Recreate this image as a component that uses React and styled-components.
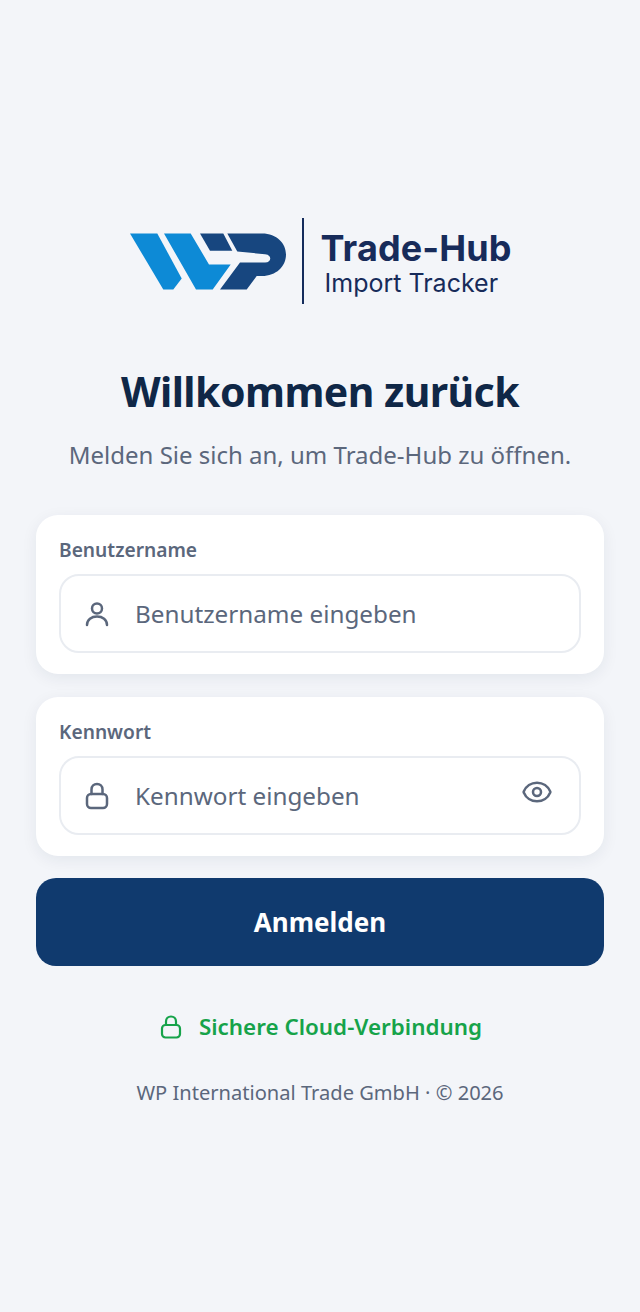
import React from "react";
import styled, { createGlobalStyle } from "styled-components";
import { Eye } from "lucide-react";

const GlobalStyle = createGlobalStyle`
  html, body {
    margin: 0;
    padding: 0;
    background: #f3f5f9;
  }
  * {
    box-sizing: border-box;
  }
`;

const Page = styled.div`
  width: 640px;
  height: 1312px;
  padding: 218px 36px 0;
  background: #f3f5f9;
  font-family: "Noto Sans", "Open Sans", sans-serif;
  display: flex;
  flex-direction: column;
`;

const Logo = styled.div`
  display: flex;
  align-items: center;
  justify-content: center;
  height: 86px;
  padding-left: 1px;
`;

const LogoDivider = styled.div`
  width: 2px;
  height: 86px;
  background: #142c5c;
  margin: 0 17px 0 14px;
`;

const LogoText = styled.div`
  display: flex;
  flex-direction: column;
  margin-top: 1px;
`;

const LogoTitle = styled.div`
  font-family: Inter, sans-serif;
  font-size: 36px;
  line-height: 42px;
  font-weight: 700;
  color: #172b5a;
  letter-spacing: 0.1px;
  white-space: nowrap;
`;

const LogoSubtitle = styled.div`
  font-family: Inter, sans-serif;
  font-size: 25px;
  line-height: 28px;
  font-weight: 400;
  color: #172b5a;
  margin-left: 4px;
  white-space: nowrap;
`;

const Title = styled.h1`
  margin: 60px 0 0;
  font-size: 41px;
  line-height: 54px;
  font-weight: 700;
  color: #0f2747;
  text-align: center;
  letter-spacing: -0.55px;
`;

const Subtitle = styled.p`
  margin: 20px 0 0;
  font-size: 24px;
  line-height: 34px;
  color: #5b677c;
  text-align: center;
`;

const Card = styled.div`
  margin-top: ${(props) => props.$top}px;
  background: #ffffff;
  border-radius: 22px;
  padding: 22px 23px 21px;
  box-shadow: 0 4px 16px rgba(15, 39, 71, 0.07);
`;

const Label = styled.label`
  display: block;
  font-size: 19.2px;
  line-height: 26px;
  font-weight: 600;
  color: #5b677c;
`;

const Field = styled.div`
  margin-top: 11px;
  height: 79px;
  border: 2px solid #e9ecf1;
  border-radius: 20px;
  display: flex;
  align-items: center;
  padding: 0 26px 0 23px;
  color: #5b677c;
`;

const FieldIcon = styled.svg`
  width: 26px;
  height: 28px;
  flex: none;
  fill: none;
  stroke: currentColor;
  stroke-width: 2.5;
  stroke-linecap: round;
  stroke-linejoin: round;
`;

const FieldText = styled.span`
  flex: 1;
  margin-left: 25px;
  font-size: 24.25px;
  color: #5b677c;
`;

const EyeIcon = styled(Eye)`
  margin-top: -8px;
  flex: none;
`;

const SubmitButton = styled.button`
  margin-top: 22px;
  height: 88px;
  border: none;
  border-radius: 20px;
  background: #103a6e;
  color: #ffffff;
  font-family: inherit;
  font-size: 26px;
  font-weight: 700;
`;

const Secure = styled.div`
  margin-top: 44px;
  padding-left: 2px;
  display: flex;
  align-items: center;
  justify-content: center;
  gap: 17px;
  color: #16a34a;
  font-size: 22.4px;
  font-weight: 600;
  line-height: 34px;
`;

const SecureIcon = styled.svg`
  width: 22px;
  height: 24px;
  flex: none;
  fill: none;
  stroke: currentColor;
  stroke-width: 2.2;
  stroke-linecap: round;
  stroke-linejoin: round;
`;

const Footer = styled.div`
  margin-top: 35px;
  text-align: center;
  font-size: 20.1px;
  line-height: 28px;
  color: #5b677c;
`;

const LogoMark = () => (
  <svg width="158" height="57" viewBox="130 233.5 158 57">
    <path d="M130 234H157.3L181.7 279L173.3 290H163.3Z" fill="#0d8ad6" />
    <path d="M164 234H190.7L209 265H230.7L212.7 290H196Z" fill="#0d8ad6" />
    <path d="M200 234H223.3L232.3 251.3H210Z" fill="#17467f" />
    <path d="M227.3 234H262C277 234 286 244 286 255C286 267 276 276.5 262 276.5H256.7L246.7 290H220L240 263H265C272 263 272 255 265 254.7L237.3 252Z" fill="#17467f" />
  </svg>
);

const UserGlyph = () => (
  <FieldIcon viewBox="0 0 26 28">
    <circle cx="13" cy="8.5" r="5" />
    <path d="M3 25C3 19.5 7.5 16.5 13 16.5C18.5 16.5 23 19.5 23 25" />
  </FieldIcon>
);

const LockGlyph = () => (
  <FieldIcon viewBox="0 0 26 28">
    <rect x="3" y="12" width="20" height="14" rx="4" />
    <path d="M7.5 12V7.5C7.5 4.2 10 2 13 2C16 2 18.5 4.2 18.5 7.5V12" />
  </FieldIcon>
);

export default function App() {
  return (
    <Page>
      <GlobalStyle />
      <Logo>
        <LogoMark />
        <LogoDivider />
        <LogoText>
          <LogoTitle>Trade-Hub</LogoTitle>
          <LogoSubtitle>Import Tracker</LogoSubtitle>
        </LogoText>
      </Logo>
      <Title>Willkommen zurück</Title>
      <Subtitle>Melden Sie sich an, um Trade-Hub zu öffnen.</Subtitle>
      <Card $top={43}>
        <Label>Benutzername</Label>
        <Field>
          <UserGlyph />
          <FieldText>Benutzername eingeben</FieldText>
        </Field>
      </Card>
      <Card $top={23}>
        <Label>Kennwort</Label>
        <Field>
          <LockGlyph />
          <FieldText>Kennwort eingeben</FieldText>
          <EyeIcon size={32} strokeWidth={1.9} />
        </Field>
      </Card>
      <SubmitButton>Anmelden</SubmitButton>
      <Secure>
        <SecureIcon viewBox="0 0 22 24">
          <rect x="2" y="10" width="18" height="12.5" rx="3.5" />
          <path d="M6 10V6.5C6 3.5 8.2 1.5 11 1.5C13.8 1.5 16 3.5 16 6.5V10" />
        </SecureIcon>
        Sichere Cloud-Verbindung
      </Secure>
      <Footer>WP International Trade GmbH · © 2026</Footer>
    </Page>
  );
}
